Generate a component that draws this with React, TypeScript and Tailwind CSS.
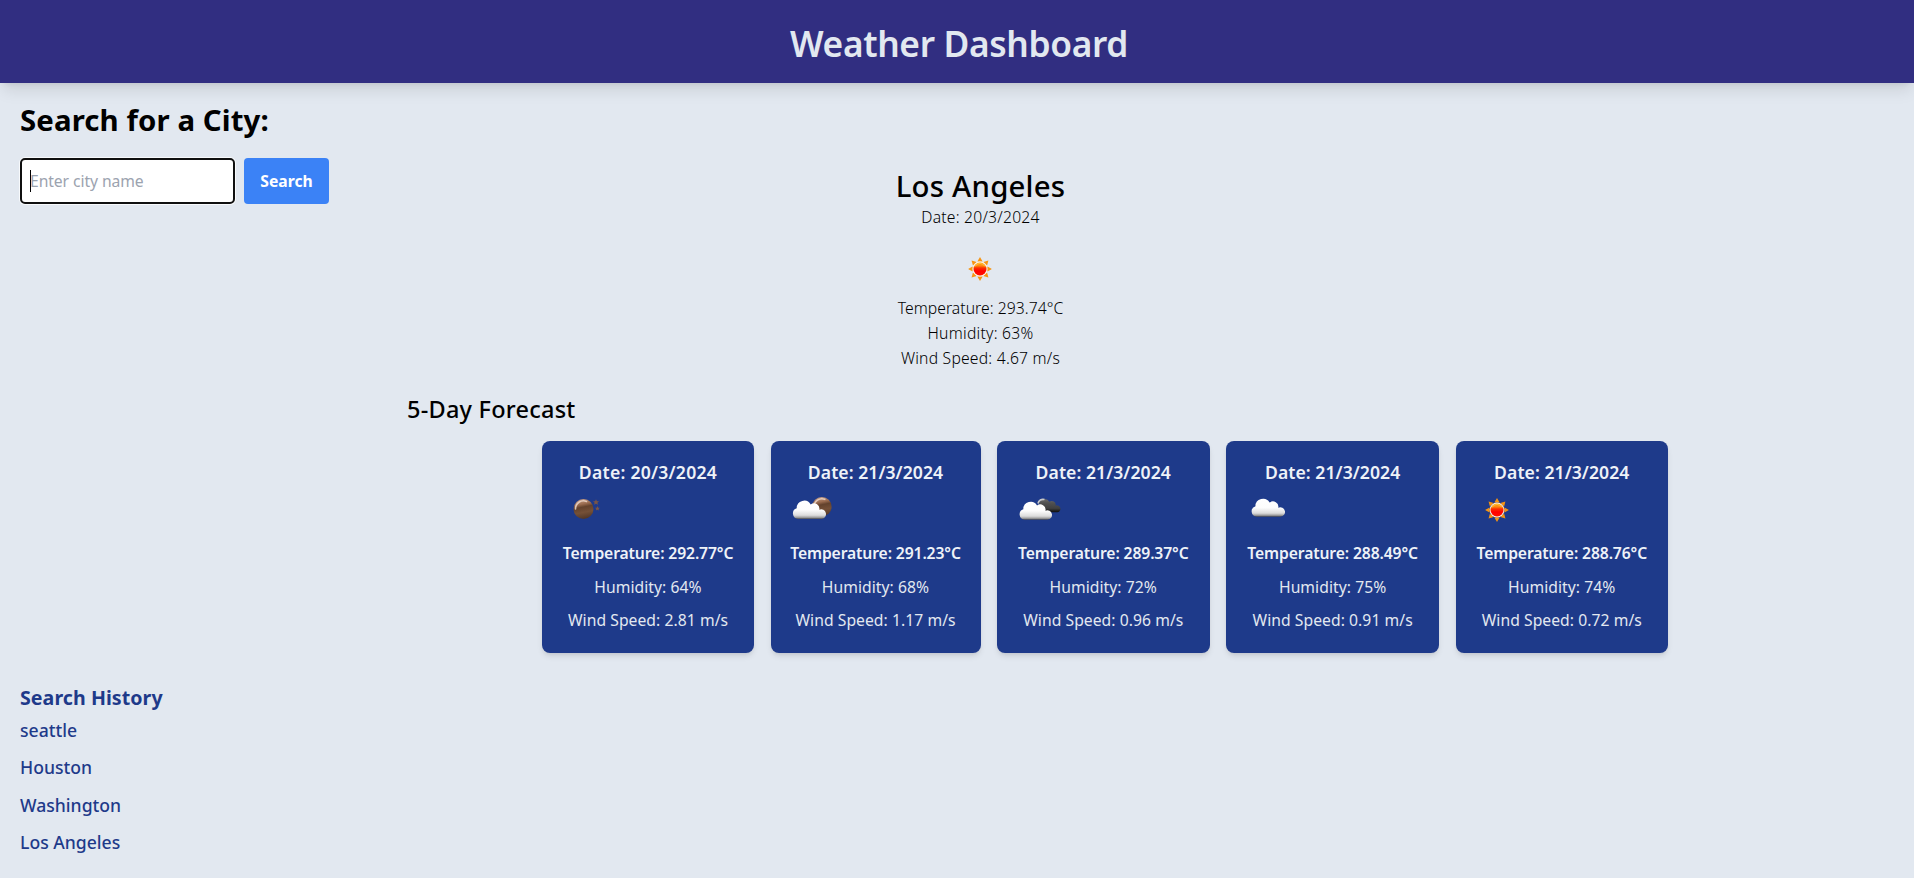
import type { ReactNode } from "react";

type IconKind = "clear-night" | "few-clouds-night" | "broken-clouds" | "cloud" | "sun";

const CLOUD =
  "M5.5 19.3A5.5 5.5 0 0 1 4.2 8.6A7.5 7.5 0 0 1 18.2 4.8A5.4 5.4 0 0 1 26.8 10.1A4.8 4.8 0 1 1 29 19.3Z";
const STAR = "M0 -3L0.9 -1L3 -0.9L1.4 0.5L1.9 2.6L0 1.5L-1.9 2.6L-1.4 0.5L-3 -0.9L-0.9 -1Z";
const RAYS = [0, 45, 90, 135, 180, 225, 270, 315];

function Gradients() {
  return (
    <svg width="0" height="0" className="absolute">
      <defs>
        <linearGradient id="white-cloud" x1="0" y1="0" x2="0" y2="1">
          <stop offset="0" stopColor="#ffffff" />
          <stop offset="0.5" stopColor="#fdfdfd" />
          <stop offset="0.8" stopColor="#dcdcdc" />
          <stop offset="0.92" stopColor="#a0a0a0" />
          <stop offset="1" stopColor="#4c4c50" />
        </linearGradient>
        <linearGradient id="dark-cloud" x1="0" y1="0" x2="0" y2="1">
          <stop offset="0" stopColor="#6a6a6a" />
          <stop offset="0.3" stopColor="#505050" />
          <stop offset="0.7" stopColor="#404040" />
          <stop offset="1" stopColor="#0c0c0c" />
        </linearGradient>
        <linearGradient id="moon" x1="0.2" y1="0" x2="0.4" y2="1">
          <stop offset="0" stopColor="#cfa68e" />
          <stop offset="0.3" stopColor="#97694d" />
          <stop offset="0.44" stopColor="#63422d" />
          <stop offset="0.7" stopColor="#755037" />
          <stop offset="1" stopColor="#533828" />
        </linearGradient>
        <linearGradient id="sun" x1="0" y1="0" x2="0" y2="1">
          <stop offset="0" stopColor="#ff9a10" />
          <stop offset="0.25" stopColor="#ff8a10" />
          <stop offset="0.42" stopColor="#fb3000" />
          <stop offset="0.65" stopColor="#ff0000" />
          <stop offset="1" stopColor="#ff1000" />
        </linearGradient>
      </defs>
    </svg>
  );
}

function Moon({ cx, cy, r }: { cx: number; cy: number; r: number }) {
  return (
    <g transform={`translate(${cx} ${cy}) scale(${r / 10})`}>
      <circle r="10" fill="url(#moon)" />
      <path d="M-8 0A8 8 0 0 1 3 -7.6" fill="none" stroke="#ecd6c8" strokeWidth="1.6" strokeLinecap="round" opacity="0.85" />
    </g>
  );
}

function Sun() {
  return (
    <g transform="translate(24 25)">
      {RAYS.map((angle) => (
        <path key={angle} d="M-2.6 -7.4L2.6 -7.4L0 -11.9Z" transform={`rotate(${angle})`} fill="#f79410" />
      ))}
      <circle r="7.4" fill="#fff3e0" />
      <circle r="6.5" fill="url(#sun)" />
      <path d="M-4.9 -2.6A5.5 5.5 0 0 1 4.9 -2.6" fill="none" stroke="#ffc83c" strokeWidth="0.9" />
    </g>
  );
}

function WeatherIcon({ kind }: { kind: IconKind }) {
  return (
    <svg width="50" height="50" viewBox="0 0 50 50" className="block shrink-0">
      {kind === "sun" && <Sun />}
      {kind === "clear-night" && (
        <>
          <Moon cx={24.5} cy={24} r={10} />
          <path d={STAR} transform="translate(37 17.2)" fill="#7a5546" />
          <path d={STAR} transform="translate(38.4 23.5) scale(0.8)" fill="#7a5546" />
        </>
      )}
      {kind === "few-clouds-night" && (
        <>
          <Moon cx={33.9} cy={21.7} r={9.7} />
          <path d={CLOUD} transform="translate(4.5 14.6)" fill="url(#white-cloud)" />
        </>
      )}
      {kind === "broken-clouds" && (
        <>
          <path d={CLOUD} transform="translate(22.3 13.4) scale(0.72)" fill="url(#dark-cloud)" />
          <path d="M24 18.5A5 5 0 0 1 30.5 14.6" fill="none" stroke="#c9c9c9" strokeWidth="1.6" />
          <path d={CLOUD} transform="translate(5.2 15.8) scale(0.98)" fill="url(#white-cloud)" />
        </>
      )}
      {kind === "cloud" && <path d={CLOUD} transform="translate(8.2 12.8) scale(1.01 0.98)" fill="url(#white-cloud)" />}
    </svg>
  );
}

interface Day {
  date: string;
  icon: IconKind;
  temp: string;
  humidity: string;
  wind: string;
  width: string;
  dateTracking: string;
}

const days: Day[] = [
  { date: "20/3/2024", icon: "clear-night", temp: "292.77", humidity: "64", wind: "2.81", width: "w-[212px]", dateTracking: "tracking-[0.25px]" },
  { date: "21/3/2024", icon: "few-clouds-night", temp: "291.23", humidity: "68", wind: "1.17", width: "w-[210px]", dateTracking: "tracking-[0.05px]" },
  { date: "21/3/2024", icon: "broken-clouds", temp: "289.37", humidity: "72", wind: "0.96", width: "w-[212.5px]", dateTracking: "tracking-[0.05px]" },
  { date: "21/3/2024", icon: "cloud", temp: "288.49", humidity: "75", wind: "0.91", width: "w-[213.25px]", dateTracking: "tracking-[0.05px]" },
  { date: "21/3/2024", icon: "sun", temp: "288.76", humidity: "74", wind: "0.72", width: "w-[212px]", dateTracking: "tracking-[0.05px]" },
];

const history = ["seattle", "Houston", "Washington", "Los Angeles"];

function ForecastCard({ day }: { day: Day }) {
  return (
    <article className={`${day.width} h-[212px] shrink-0 rounded-lg bg-[#1e3a8a] pt-[17px] text-center text-[15.7px] leading-6 whitespace-nowrap text-slate-200 shadow-md`}>
      <h4 className={`text-[17.6px] leading-7 font-semibold text-[#eef2f8] ${day.dateTracking}`}>Date: {day.date}</h4>
      <div className="-mt-px mb-[6px] pl-[17px]">
        <WeatherIcon kind={day.icon} />
      </div>
      <p className="mb-[10px] font-semibold tracking-[-0.12px] text-[#eef2f8]">Temperature: {day.temp}°C</p>
      <p className="mb-[9px] tracking-[0.05px]">Humidity: {day.humidity}%</p>
      <p className="tracking-[0.05px]">Wind Speed: {day.wind} m/s</p>
    </article>
  );
}

function Line({ children, className }: { children: ReactNode; className: string }) {
  return <p className={`text-[15.7px] leading-[25px] font-light text-black ${className}`}>{children}</p>;
}

export default function App() {
  return (
    <div className="h-[878px] overflow-hidden bg-[#e2e8f0] font-['Noto_Sans',sans-serif] text-black">
      <Gradients />
      <header className="h-[83px] bg-[#312e81] pt-[23px] pl-[4px] text-center shadow-lg">
        <h1 className="text-[35.3px] leading-10 font-semibold tracking-[-0.35px] text-slate-200">Weather Dashboard</h1>
      </header>

      <main className="flex h-[601px]">
        <section className="w-[407px] shrink-0 pt-[19px] pl-5">
          <h2 className="text-[29.4px] leading-9 font-bold tracking-[0.1px]">Search for a City:</h2>
          <form className="mt-5 flex gap-[9px]" onSubmit={(e) => e.preventDefault()}>
            <label className="flex h-[46px] w-[215px] items-center rounded-[5px] border-2 border-[#101010] bg-white pl-2 shadow-[0_0_0_1px_#f8fafc]">
              <span className="h-[22px] w-px bg-black" />
              <input
                type="text"
                placeholder="Enter city name"
                className="-ml-px w-[190px] bg-transparent pt-0.5 text-[15.7px] tracking-[-0.08px] outline-none placeholder:text-[#9ca3af]"
              />
            </label>
            <button className="h-[46px] w-[85px] rounded bg-[#3b82f6] pt-px text-[15.7px] font-bold text-white">Search</button>
          </form>
        </section>

        <section className="w-[1147px] shrink-0">
          <div className="flex flex-col items-center pt-[85px] text-center">
            <h2 className="text-[29.4px] leading-9 font-medium tracking-[0.2px]">Los Angeles</h2>
            <Line className="mt-px tracking-[0.22px]">Date: 20/3/2024</Line>
            <div className="mt-[14px] mb-0.5">
              <WeatherIcon kind="sun" />
            </div>
            <Line className="tracking-[0.05px]">Temperature: 293.74°C</Line>
            <Line className="tracking-[0.25px]">Humidity: 63%</Line>
            <Line className="tracking-[0.22px]">Wind Speed: 4.67 m/s</Line>
          </div>
          <h3 className="mt-[22px] text-[23.5px] leading-8 font-medium tracking-[0.24px]">5-Day Forecast</h3>
          <div className="mt-4 ml-[135px] flex gap-[16.5px]">
            {days.map((day, i) => (
              <ForecastCard key={i} day={day} />
            ))}
          </div>
        </section>
      </main>

      <aside className="pl-5 text-[#1e3a8a]">
        <h3 className="text-[19.6px] leading-7 font-bold tracking-[0.05px]">Search History</h3>
        <ul className="mt-1 flex flex-col gap-[9.3px] text-[17.6px] leading-7 font-medium">
          {history.map((city) => (
            <li key={city}>{city}</li>
          ))}
        </ul>
      </aside>
    </div>
  );
}
